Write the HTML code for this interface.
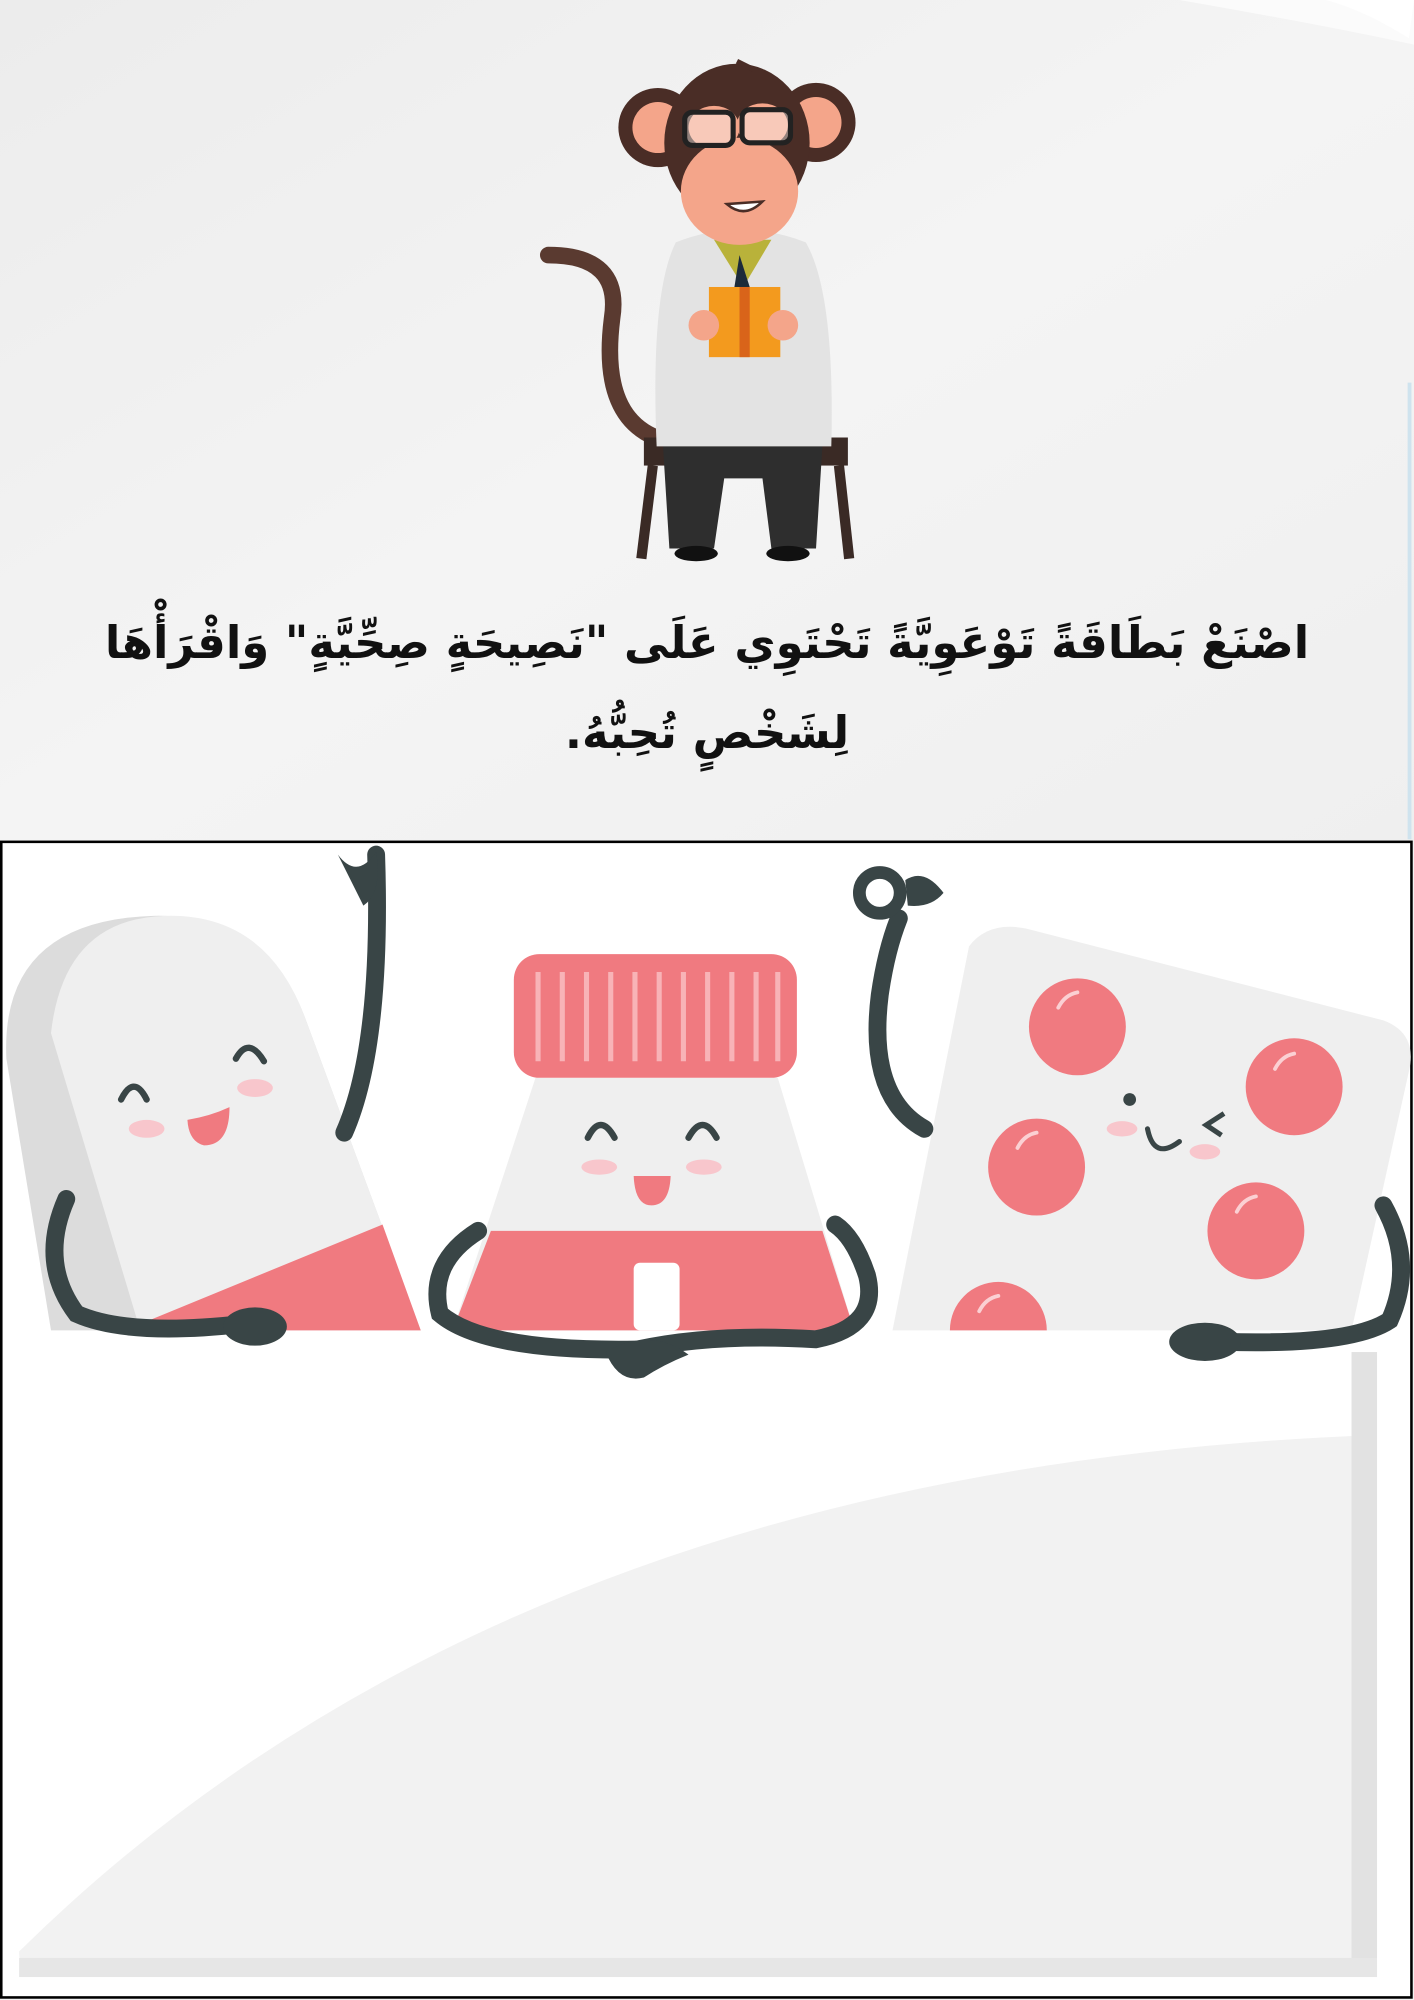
<!DOCTYPE html>
<html><head><meta charset="utf-8"><style>
html,body{margin:0;padding:0;width:1414px;height:2000px;overflow:hidden;background:#f2f2f2}
svg{position:absolute;left:0;top:0}
.t{position:absolute;left:40px;width:1334px;text-align:center;direction:rtl;font-family:"DejaVu Sans",sans-serif;font-weight:bold;font-size:45px;color:#111;line-height:90px;top:598px}
</style></head><body>
<svg width="1414" height="2000" viewBox="0 0 1109 1568" preserveAspectRatio="none">
<defs><linearGradient id="bg" x1="0" y1="0" x2="1" y2="1"><stop offset="0" stop-color="#ececec"/><stop offset="0.5" stop-color="#f4f4f4"/><stop offset="1" stop-color="#efefef"/></linearGradient></defs>
<rect x="0" y="0" width="1109" height="660" fill="url(#bg)"/>
<path d="M925 0 L1109 0 L1109 35 Q1040 20 925 0Z" fill="#fbfbfb"/>
<path d="M1040 0 L1109 0 L1105 30 Q1070 8 1040 0Z" fill="#ffffff"/>
<rect x="1104" y="300" width="3" height="358" fill="#cfe3ee"/>
<path d="M520 345 Q470 330 480 250 Q488 200 430 200" stroke="#5a3a30" stroke-width="13" fill="none" stroke-linecap="round"/>
<rect x="505" y="343" width="160" height="22" fill="#3a2a25"/>
<path d="M512 365 L503 438 M658 365 L666 438" stroke="#3a2a25" stroke-width="8"/>
<path d="M520 350 L645 350 L640 430 L605 430 L598 375 L568 375 L560 430 L525 430Z" fill="#2e2e2e"/>
<ellipse cx="546" cy="434" rx="17" ry="6" fill="#111"/><ellipse cx="618" cy="434" rx="17" ry="6" fill="#111"/>
<path d="M530 190 Q580 170 632 190 Q655 230 652 350 L515 350 Q510 230 530 190Z" fill="#e3e3e3"/>
<path d="M560 188 L583 225 L605 188Z" fill="#b9b23a"/>
<path d="M580 200 L576 225 L584 230 L588 225Z" fill="#1c2a3a"/>
<circle cx="516" cy="100" r="31" fill="#4a2d26"/><circle cx="516" cy="100" r="20" fill="#f4a58a"/>
<circle cx="640" cy="96" r="31" fill="#4a2d26"/><circle cx="640" cy="96" r="20" fill="#f4a58a"/>
<ellipse cx="578" cy="112" rx="57" ry="62" fill="#4a2d26"/>
<ellipse cx="580" cy="150" rx="46" ry="42" fill="#f4a58a"/>
<ellipse cx="560" cy="100" rx="20" ry="17" fill="#f4a58a"/><ellipse cx="598" cy="98" rx="20" ry="17" fill="#f4a58a"/>
<rect x="537" y="88" width="38" height="26" rx="6" fill="#fff" fill-opacity=".4" stroke="#222" stroke-width="4"/>
<rect x="582" y="86" width="38" height="26" rx="6" fill="#fff" fill-opacity=".4" stroke="#222" stroke-width="4"/>
<path d="M570 160 Q584 172 598 158Z" fill="#fff" stroke="#4a2d26" stroke-width="2"/>
<path d="M578 48 L592 55" stroke="#4a2d26" stroke-width="4"/>
<rect x="556" y="225" width="56" height="55" fill="#f39a1e"/><rect x="580" y="225" width="8" height="55" fill="#d9641a"/>
<circle cx="552" cy="255" r="12" fill="#f4a58a"/><circle cx="614" cy="255" r="12" fill="#f4a58a"/>
<rect x="1" y="660" width="1106" height="906" fill="#fff" stroke="#000" stroke-width="2"/>
<path d="M15 1530 Q400 1150 1080 1125 L1080 1535 Q1070 1548 1050 1548 L30 1548 Q15 1548 15 1530Z" fill="#f2f2f2"/>
<rect x="1060" y="1060" width="20" height="480" fill="#e2e2e2"/>
<rect x="15" y="1535" width="1065" height="15" fill="#e6e6e6"/>
<path d="M40 1043 L5 830 Q0 722 120 718 Q210 716 240 800 L330 1043Z" fill="#dcdcdc"/>
<path d="M110 1043 L40 810 Q50 720 130 718 Q210 716 240 800 L330 1043Z" fill="#efefef"/>
<path d="M110 1038 L300 960 L330 1043 L110 1043Z" fill="#f07a80"/>
<path d="M95 862 Q105 842 115 862 M185 830 Q195 812 207 832" stroke="#394546" stroke-width="5" fill="none" stroke-linecap="round"/>
<ellipse cx="115" cy="885" rx="14" ry="7" fill="#f8c6cc"/><ellipse cx="200" cy="853" rx="14" ry="7" fill="#f8c6cc"/>
<path d="M147 878 Q165 875 180 868 Q180 898 160 898 Q148 895 147 878Z" fill="#f07a80"/>
<path d="M270 888 Q300 820 295 670" stroke="#394546" stroke-width="14" fill="none" stroke-linecap="round"/>
<path d="M265 670 Q280 690 295 668 Q300 700 285 710Z" fill="#394546"/>
<path d="M52 940 Q30 990 60 1030 Q100 1048 190 1038" stroke="#394546" stroke-width="14" fill="none" stroke-linecap="round"/>
<ellipse cx="200" cy="1040" rx="25" ry="15" fill="#394546"/>
<path d="M420 845 L610 845 L670 1043 L355 1043Z" fill="#efefef"/>
<path d="M385 965 L645 965 L670 1043 L355 1043Z" fill="#f07a80"/>
<rect x="497" y="990" width="36" height="53" rx="5" fill="#fff"/>
<rect x="403" y="748" width="222" height="97" rx="20" fill="#f07a80"/>
<g stroke="#f8b3b7" stroke-width="4"><path d="M422 762V832M441 762V832M460 762V832M479 762V832M498 762V832M517 762V832M536 762V832M555 762V832M574 762V832M593 762V832M610 762V832"/></g>
<path d="M461 892 Q471 872 482 892 M540 892 Q551 872 562 892" stroke="#394546" stroke-width="5" fill="none" stroke-linecap="round"/>
<ellipse cx="470" cy="915" rx="14" ry="6" fill="#f8c6cc"/><ellipse cx="552" cy="915" rx="14" ry="6" fill="#f8c6cc"/>
<path d="M497 922 L526 922 Q525 945 511 945 Q498 945 497 922Z" fill="#f07a80"/>
<path d="M375 965 Q335 990 345 1030 Q380 1060 500 1058 Q560 1045 640 1050 Q690 1040 680 1000 Q670 970 655 960" stroke="#394546" stroke-width="14" fill="none" stroke-linecap="round"/>
<path d="M475 1060 Q510 1040 540 1062 Q520 1070 505 1080 Q485 1085 475 1060Z" fill="#394546"/>
<path d="M760 742 Q775 722 805 728 L1085 800 Q1112 810 1105 840 L1060 1043 L700 1043Z" fill="#efefef"/>
<g fill="#f07a80"><circle cx="845" cy="805" r="38"/><circle cx="1015" cy="852" r="38"/><circle cx="813" cy="915" r="38"/><circle cx="985" cy="965" r="38"/><path d="M745 1043 A38 38 0 0 1 821 1043Z"/></g>
<g stroke="#fbd0d3" stroke-width="3" fill="none" stroke-linecap="round"><path d="M830 790 Q835 780 845 778"/><path d="M1000 838 Q1005 828 1015 826"/><path d="M798 900 Q803 890 813 888"/><path d="M970 950 Q975 940 985 938"/><path d="M768 1028 Q773 1018 783 1016"/></g>
<circle cx="886" cy="862" r="5" fill="#394546"/>
<path d="M960 873 L946 882 L958 890" stroke="#394546" stroke-width="4" fill="none"/>
<path d="M900 885 Q905 910 925 895" stroke="#394546" stroke-width="4" fill="none" stroke-linecap="round"/>
<ellipse cx="880" cy="885" rx="12" ry="6" fill="#f8c6cc"/><ellipse cx="945" cy="903" rx="12" ry="6" fill="#f8c6cc"/>
<path d="M725 885 Q680 860 690 780 Q695 745 705 720" stroke="#394546" stroke-width="14" fill="none" stroke-linecap="round"/>
<circle cx="690" cy="700" r="16" fill="none" stroke="#394546" stroke-width="10"/>
<path d="M710 690 Q725 680 740 700 Q730 712 712 710Z" fill="#394546"/>
<path d="M1085 945 Q1110 990 1090 1035 Q1060 1055 960 1052" stroke="#394546" stroke-width="14" fill="none" stroke-linecap="round"/>
<ellipse cx="945" cy="1052" rx="28" ry="15" fill="#394546"/>
</svg>
<div class="t">اصْنَعْ بَطَاقَةً تَوْعَوِيَّةً تَحْتَوِي عَلَى "نَصِيحَةٍ صِحِّيَّةٍ" وَاقْرَأْهَا<br>لِشَخْصٍ تُحِبُّهُ.</div>
</body></html>
